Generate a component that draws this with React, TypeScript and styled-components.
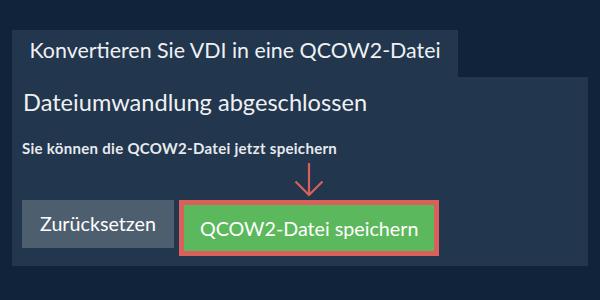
import React from "react";
import styled, { createGlobalStyle } from "styled-components";

const Global = createGlobalStyle`
  html, body { margin: 0; padding: 0; background: #11233a; }
  body { font-family: Lato, "Open Sans", sans-serif; color: #e9edf1; }
`;

const Page = styled.div`
  width: 600px;
  height: 300px;
  box-sizing: border-box;
  padding: 30px 12px 0;
  background: #11233a;
`;

const Tab = styled.div`
  width: 446px;
  height: 47px;
  box-sizing: border-box;
  padding: 6.5px 0 0 17.5px;
  background: #22364d;
  font-size: 21.4px;
  font-weight: 400;
  line-height: 26px;
  color: #eef1f4;
  white-space: nowrap;
`;

const Panel = styled.div`
  width: 576px;
  height: 189px;
  box-sizing: border-box;
  padding: 11px 10px 0;
  background: #22364d;
  display: flex;
  flex-direction: column;
`;

const Heading = styled.h2`
  margin: 0 0 0 1px;
  font-size: 23.6px;
  font-weight: 400;
  line-height: 28px;
  color: #eef1f4;
`;

const Note = styled.p`
  margin: 23px 0 0;
  font-size: 15px;
  font-weight: 700;
  letter-spacing: 0.3px;
  line-height: 18px;
  color: #e6eaee;
`;

const Actions = styled.div`
  margin-top: 43px;
  display: flex;
  align-items: flex-start;
  gap: 5px;
`;

const Button = styled.button<{ $variant: "reset" | "save" }>`
  position: relative;
  box-sizing: border-box;
  margin: 0;
  font-family: Lato, "Open Sans", sans-serif;
  font-weight: 400;
  font-size: 19.7px;
  line-height: 24px;
  color: #ffffff;
  cursor: pointer;
  white-space: nowrap;
  ${(p) =>
    p.$variant === "reset"
      ? `
    height: 48px;
    padding: 0 18px;
    border: none;
    background: #4d5e6f;
  `
      : `
    height: 56px;
    padding: 2px 16px 0;
    border: 5px solid #d9605b;
    background: #5cb85c;
  `}
`;

const Arrow = styled.svg`
  position: absolute;
  left: 50%;
  top: -45px;
  width: 32px;
  height: 36px;
  margin-left: -16px;
  overflow: visible;
`;

export default function App() {
  return (
    <>
      <Global />
      <Page>
        <Tab>Konvertieren Sie VDI in eine QCOW2-Datei</Tab>
        <Panel>
          <Heading>Dateiumwandlung abgeschlossen</Heading>
          <Note>Sie können die QCOW2-Datei jetzt speichern</Note>
          <Actions>
            <Button $variant="reset">Zurücksetzen</Button>
            <Button $variant="save">
              <Arrow viewBox="0 0 32 36" aria-hidden="true">
                <path
                  d="M16 3 V35 M2.5 21.5 L16 35 L29.5 21.5"
                  fill="none"
                  stroke="#d9605b"
                  strokeWidth="2.2"
                />
              </Arrow>
              QCOW2-Datei speichern
            </Button>
          </Actions>
        </Panel>
      </Page>
    </>
  );
}
